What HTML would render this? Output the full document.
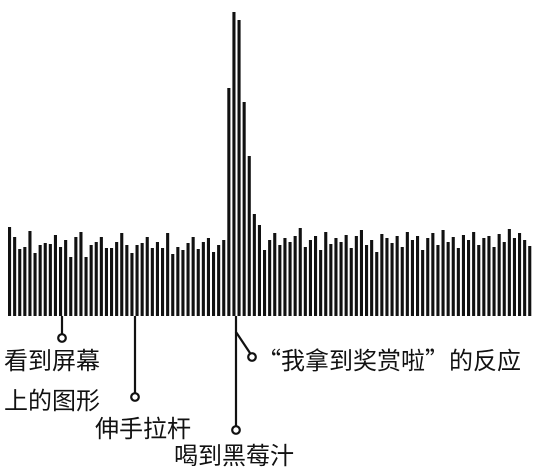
<!DOCTYPE html>
<html><head><meta charset="utf-8"><style>
html,body{margin:0;padding:0;background:#fff;width:542px;height:466px;overflow:hidden}
svg{position:absolute;left:0;top:0}
.t{position:absolute;font-family:"Noto Sans CJK SC","WenQuanYi Zen Hei",sans-serif;font-size:24px;line-height:24px;color:#111;white-space:nowrap}
</style></head><body>
<svg id="s" width="542" height="466" xmlns="http://www.w3.org/2000/svg">
<g stroke="#111" stroke-width="2.2" fill="none">
<line x1="62" y1="316" x2="62" y2="334"/>
<circle cx="62" cy="338" r="3.8" fill="#fff"/>
<line x1="135" y1="316" x2="135" y2="393"/>
<circle cx="135" cy="397" r="3.8" fill="#fff"/>
<polyline points="236,316 236,332 250,353"/>
<circle cx="252" cy="357" r="3.8" fill="#fff"/>
<line x1="236" y1="332" x2="236" y2="426"/>
<circle cx="236" cy="430" r="3.8" fill="#fff"/>
</g>
<g id="b" fill="#111"></g>
</svg>
<div class="t" style="left:4px;top:347px">看到屏幕</div>
<div class="t" style="left:4px;top:387px">上的图形</div>
<div class="t" style="left:95px;top:415px">伸手拉杆</div>
<div class="t" style="left:174px;top:442px">喝到黑莓汁</div>
<div class="t" style="left:257px;top:347px;font-size:24px">“我拿到奖赏啦”的反应</div>
<script>
var tops=[227,237,249,247,231,253,245,243,244,235,247,240,257,237,232,257,245,242,237,248,248,242,233,245,253,245,243,237,248,242,248,233,254,247,250,243,237,249,242,238,252,245,240,
88,12,20,102,156,214,225,
250,240,233,245,238,242,236,228,247,240,236,250,232,244,238,242,235,248,236,230,245,240,252,234,238,243,236,247,232,240,236,250,238,233,245,230,242,237,248,235,240,232,245,238,236,247,234,242,229,238,233,240,246];
var g=document.getElementById('b'),h='';
for(var i=0;i<tops.length;i++){var x=8+i*5.1;if(x>537)break;
h+='<rect x="'+x.toFixed(1)+'" y="'+tops[i]+'" width="3.1" height="'+(316-tops[i])+'"/>';}
g.innerHTML=h;
</script>
</body></html>
